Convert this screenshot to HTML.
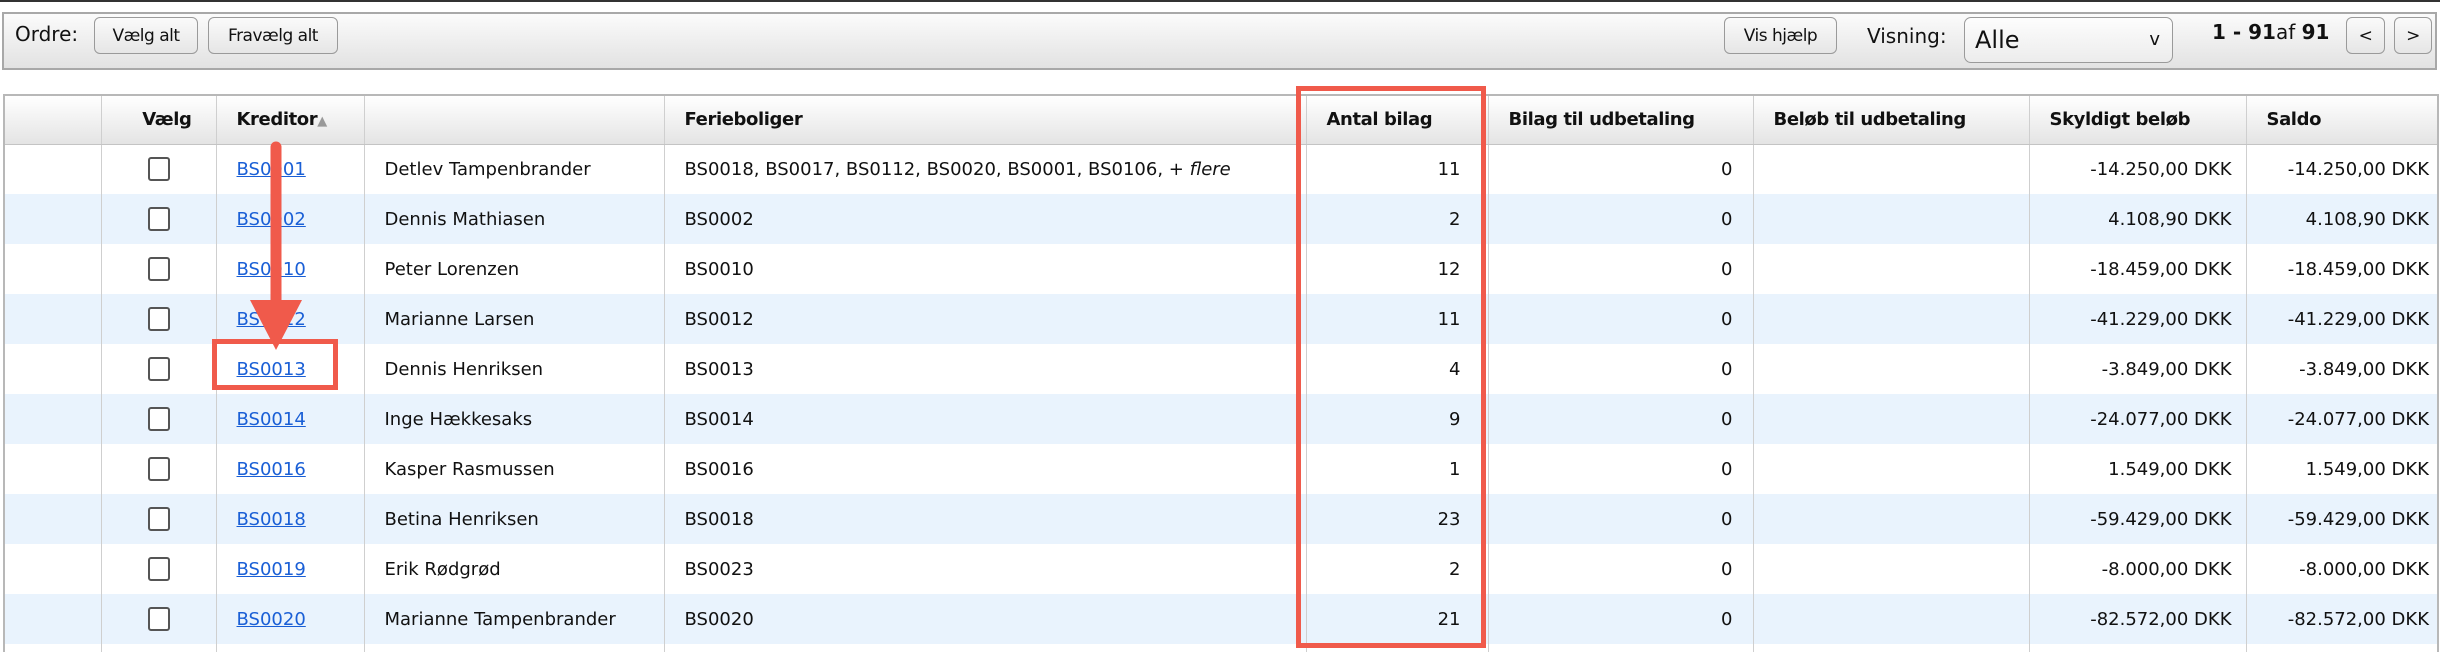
<!DOCTYPE html>
<html><head><meta charset="utf-8"><style>
*{box-sizing:border-box;margin:0;padding:0}
html{width:2440px;height:652px;overflow:hidden}
body{width:2440px;height:652px;background:#fff;font-family:"DejaVu Sans","Liberation Sans",sans-serif;font-size:18px;color:#111;position:relative;overflow:hidden}
.topline{position:absolute;left:0;top:0;width:2440px;height:2px;background:#333}
.bar{position:absolute;left:2px;top:12px;width:2435px;height:58px;border:2px solid #a8a8a8;background:linear-gradient(#fbfbfb,#e2e2e2)}
.t{position:absolute;white-space:nowrap}
.btn{position:absolute;top:17px;height:37px;border:1px solid #9a9a9a;border-radius:6px;background:linear-gradient(#fafafa,#e6e6e6);font-size:17px;display:flex;align-items:center;justify-content:center;letter-spacing:-0.5px}
.sel{position:absolute;left:1964px;top:17px;width:209px;height:46px;border:1px solid #9a9a9a;border-radius:7px;background:linear-gradient(#fdfdfd,#ececec);font-size:24px;padding-left:10px;line-height:44px}
.wrap{position:absolute;left:0;top:0;width:2440px;height:652px;overflow:hidden}
table{position:absolute;left:3px;top:94px;border-collapse:collapse;table-layout:fixed;width:2434px;border:2px solid #b8b8b8}
th,td{border-left:1px solid #cfcfcf;border-right:1px solid #cfcfcf;white-space:nowrap;overflow:hidden;padding:0 20px}
th{height:49px;background:linear-gradient(#ffffff,#e4e4e4);text-align:left;font-weight:bold;border-bottom:1px solid #c4c4c4;letter-spacing:-0.4px}
td{height:50px}
tr:nth-child(odd) td{background:#e9f3fd}
a{color:#1a5fd6;text-decoration:underline}
.c{text-align:center}.r{text-align:right}
.cb{display:inline-block;width:22px;height:24px;border:2px solid #555;border-radius:3px;background:#fff;vertical-align:middle}
.red{position:absolute;border:5px solid #f05a4b}
</style></head><body>
<div class="wrap">
<div class="topline"></div>
<div class="bar"></div>
<div class="t" style="left:15px;top:22px;font-size:20px">Ordre:</div>
<div class="btn" style="left:94px;width:104px">Vælg alt</div>
<div class="btn" style="left:208px;width:130px">Fravælg alt</div>
<div class="btn" style="left:1724px;width:113px">Vis hjælp</div>
<div class="t" style="left:1867px;top:24px;font-size:20px">Visning:</div>
<div class="sel">Alle<span style="position:absolute;right:12px;top:0;font-size:18px">v</span></div>
<div class="t" style="left:2212px;top:20px;font-size:20px"><b>1 - 91</b>af <b>91</b></div>
<div class="btn" style="left:2346px;width:39px">&lt;</div>
<div class="btn" style="left:2394px;width:38px">&gt;</div>
<table>
<colgroup><col style="width:97px"><col style="width:115px"><col style="width:148px"><col style="width:300px"><col style="width:642px"><col style="width:182px"><col style="width:265px"><col style="width:276px"><col style="width:217px"><col style="width:192px"></colgroup>
<tr><th></th><th class="r" style="padding-right:24px">Vælg</th><th>Kreditor<span style="color:#999;font-size:13px">▲</span></th><th></th><th>Ferieboliger</th><th>Antal bilag</th><th>Bilag til udbetaling</th><th>Beløb til udbetaling</th><th>Skyldigt beløb</th><th>Saldo</th></tr>
<tr><td></td><td class="c"><span class="cb"></span></td><td><a>BS0001</a></td><td>Detlev Tampenbrander</td><td>BS0018, BS0017, BS0112, BS0020, BS0001, BS0106, <i>+ flere</i></td><td class="r" style="padding-right:27px">11</td><td class="r">0</td><td></td><td class="r" style="padding-right:14px">-14.250,00 DKK</td><td class="r" style="padding-right:8px">-14.250,00 DKK</td></tr>
<tr><td></td><td class="c"><span class="cb"></span></td><td><a>BS0002</a></td><td>Dennis Mathiasen</td><td>BS0002</td><td class="r" style="padding-right:27px">2</td><td class="r">0</td><td></td><td class="r" style="padding-right:14px">4.108,90 DKK</td><td class="r" style="padding-right:8px">4.108,90 DKK</td></tr>
<tr><td></td><td class="c"><span class="cb"></span></td><td><a>BS0010</a></td><td>Peter Lorenzen</td><td>BS0010</td><td class="r" style="padding-right:27px">12</td><td class="r">0</td><td></td><td class="r" style="padding-right:14px">-18.459,00 DKK</td><td class="r" style="padding-right:8px">-18.459,00 DKK</td></tr>
<tr><td></td><td class="c"><span class="cb"></span></td><td><a>BS0012</a></td><td>Marianne Larsen</td><td>BS0012</td><td class="r" style="padding-right:27px">11</td><td class="r">0</td><td></td><td class="r" style="padding-right:14px">-41.229,00 DKK</td><td class="r" style="padding-right:8px">-41.229,00 DKK</td></tr>
<tr><td></td><td class="c"><span class="cb"></span></td><td><a>BS0013</a></td><td>Dennis Henriksen</td><td>BS0013</td><td class="r" style="padding-right:27px">4</td><td class="r">0</td><td></td><td class="r" style="padding-right:14px">-3.849,00 DKK</td><td class="r" style="padding-right:8px">-3.849,00 DKK</td></tr>
<tr><td></td><td class="c"><span class="cb"></span></td><td><a>BS0014</a></td><td>Inge Hækkesaks</td><td>BS0014</td><td class="r" style="padding-right:27px">9</td><td class="r">0</td><td></td><td class="r" style="padding-right:14px">-24.077,00 DKK</td><td class="r" style="padding-right:8px">-24.077,00 DKK</td></tr>
<tr><td></td><td class="c"><span class="cb"></span></td><td><a>BS0016</a></td><td>Kasper Rasmussen</td><td>BS0016</td><td class="r" style="padding-right:27px">1</td><td class="r">0</td><td></td><td class="r" style="padding-right:14px">1.549,00 DKK</td><td class="r" style="padding-right:8px">1.549,00 DKK</td></tr>
<tr><td></td><td class="c"><span class="cb"></span></td><td><a>BS0018</a></td><td>Betina Henriksen</td><td>BS0018</td><td class="r" style="padding-right:27px">23</td><td class="r">0</td><td></td><td class="r" style="padding-right:14px">-59.429,00 DKK</td><td class="r" style="padding-right:8px">-59.429,00 DKK</td></tr>
<tr><td></td><td class="c"><span class="cb"></span></td><td><a>BS0019</a></td><td>Erik Rødgrød</td><td>BS0023</td><td class="r" style="padding-right:27px">2</td><td class="r">0</td><td></td><td class="r" style="padding-right:14px">-8.000,00 DKK</td><td class="r" style="padding-right:8px">-8.000,00 DKK</td></tr>
<tr><td></td><td class="c"><span class="cb"></span></td><td><a>BS0020</a></td><td>Marianne Tampenbrander</td><td>BS0020</td><td class="r" style="padding-right:27px">21</td><td class="r">0</td><td></td><td class="r" style="padding-right:14px">-82.572,00 DKK</td><td class="r" style="padding-right:8px">-82.572,00 DKK</td></tr>
<tr><td style="height:12px"></td><td></td><td></td><td></td><td></td><td></td><td></td><td></td><td></td><td></td></tr>
</table>
<div class="red" style="left:1296px;top:86px;width:190px;height:562px"></div>
<div class="red" style="left:212px;top:339px;width:126px;height:51px"></div>
<svg style="position:absolute;left:0;top:0" width="2440" height="652"><line x1="276" y1="147" x2="276" y2="310" stroke="#f05a4b" stroke-width="11" stroke-linecap="round"/><polygon points="250,300 302,300 276,350" fill="#f05a4b"/></svg>
</div>
</body></html>
